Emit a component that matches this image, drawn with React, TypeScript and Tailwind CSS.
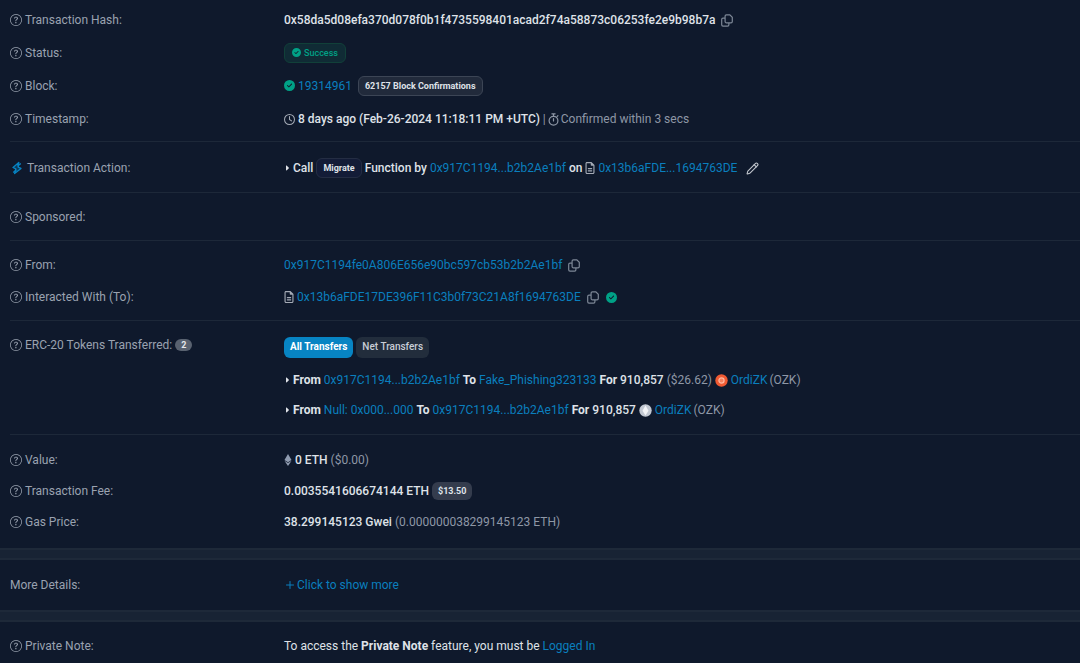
import type { ReactNode } from "react"
import { BsQuestionCircle } from "react-icons/bs"
import { FaCaretRight, FaCircleCheck, FaEthereum, FaRegClock, FaRegFileLines } from "react-icons/fa6"
import { Pencil, Plus } from "lucide-react"

function CopyIcon() {
  return (
    <svg width="12" height="13" viewBox="0 0 12 13" fill="none" stroke="currentColor" strokeWidth="1.2">
      <path d="M5.4 0.8h3.4l2.5 2.5v4.2a1.3 1.3 0 0 1-1.3 1.3H5.4a1.3 1.3 0 0 1-1.3-1.3V2.1a1.3 1.3 0 0 1 1.3-1.3z" />
      <path d="M4 4.2H2A1.3 1.3 0 0 0 0.7 5.5v5.3a1.3 1.3 0 0 0 1.3 1.3h4.6a1.3 1.3 0 0 0 1.3-1.3V9" />
    </svg>
  )
}

function BoltIcon() {
  return (
    <svg width="14" height="14" viewBox="0 0 14 14" className="text-[#0784c3]" fill="none" stroke="currentColor" strokeWidth="1.3" strokeLinejoin="round">
      <path d="M8.8 1.5 3 6.5l2.8 1.3L4.6 12.5 11 7.4 8.2 6.1z" fill="currentColor" fillOpacity="0.3" />
      <path d="M10.8 2.5 7.5 5.2M6.5 8.8 3.2 11.5" />
    </svg>
  )
}

function StopwatchIcon() {
  return (
    <svg width="11" height="13" viewBox="0 0 11 13" fill="none" stroke="currentColor" strokeWidth="1.2" strokeLinecap="round">
      <circle cx="5.5" cy="7.7" r="4.4" />
      <path d="M3.9 0.8h3.2M5.5 0.8v2.4M5.5 5.6v2.3M9 3.6l0.9-0.9" />
    </svg>
  )
}

function CopyButton({ label }: { label: string }) {
  return (
    <button type="button" aria-label={label} className="ml-[3px] text-[#7d8796]">
      <CopyIcon />
    </button>
  )
}

function Address({ children }: { children: ReactNode }) {
  return (
    <a href="#" className="text-[#0a7fbe]">
      {children}
    </a>
  )
}

function Verified() {
  return <FaCircleCheck size={11} className="shrink-0 text-[#00a186]" />
}

function ContractIcon() {
  return <FaRegFileLines className="h-3 w-2.5 text-[#a5abb6]" />
}

function Caret() {
  return <FaCaretRight className="h-2 w-1.5" />
}

type RowProps = {
  label: string
  icon?: ReactNode
  badge?: string
  height?: string
  children?: ReactNode
}

function Row({ label, icon, badge, height = "min-h-8", children }: RowProps) {
  return (
    <div className={`grid grid-cols-[274px_1fr] items-center ${height}`}>
      <dt className="flex items-center gap-[3px] text-[#9aa2b0]">
        {icon ?? <BsQuestionCircle size={12} />}
        {label}
        {badge && <span className="rounded-full bg-[#596270] px-1.5 text-[9px] leading-3 font-bold text-[#e6e8eb]">{badge}</span>}
      </dt>
      <dd className="flex items-center gap-[3px]">{children}</dd>
    </div>
  )
}

const transfers = [
  { from: "0x917C1194...b2b2Ae1bf", to: "Fake_Phishing323133", usd: "($26.62)", logo: "orange" },
  { from: "Null: 0x000...000", to: "0x917C1194...b2b2Ae1bf", usd: "", logo: "silver" },
]

function TokenLogo({ kind }: { kind: string }) {
  if (kind === "orange") {
    return (
      <svg width="13" height="13" viewBox="0 0 13 13">
        <circle cx="6.5" cy="6.5" r="6.2" fill="#f05a32" />
        <circle cx="6.5" cy="6.5" r="2.6" fill="#f5805d" stroke="#ffb8a0" strokeWidth="1.2" />
      </svg>
    )
  }
  return (
    <svg width="13" height="13" viewBox="0 0 13 13">
      <circle cx="6.5" cy="6.5" r="6.2" fill="#c2c8d2" />
      <path d="M6.5 1.5 9.5 6.7 6.5 11.5 3.5 6.7z" fill="#f3f4f7" />
    </svg>
  )
}

function Divider() {
  return <div className="h-3 border-y-2 border-[#1e2939] bg-[#182334]" />
}

export default function App() {
  return (
    <main className="min-h-screen bg-[#0f192c] font-[Roboto,sans-serif] text-[12px] leading-4 whitespace-nowrap text-[#dfe2e8]">
      <dl className="pl-2.5">
        <div className="border-b border-[#1d2839] pt-1 pb-[5px]">
          <Row label="Transaction Hash:">
            <span className="font-medium">0x58da5d08efa370d078f0b1f4735598401acad2f74a58873c06253fe2e9b98b7a</span>
            <CopyButton label="Copy transaction hash" />
          </Row>
          <Row label="Status:" height="min-h-[33px]">
            <span className="flex h-5 items-center gap-[3px] rounded-md border border-[#114039] bg-[#102b35] px-[7px] text-[9px] font-medium text-[#00a186]">
              <FaCircleCheck size={9} />
              Success
            </span>
          </Row>
          <Row label="Block:" height="min-h-[33px]">
            <Verified />
            <Address>19314961</Address>
            <span className="ml-[3px] flex h-5 items-center rounded-md border border-[#3c4555] bg-[#212a3b] px-1.5 text-[9px] font-bold">
              62157 Block Confirmations
            </span>
          </Row>
          <Row label="Timestamp:" height="min-h-[34px]">
            <FaRegClock size={11} className="text-[#a5abb6]" />
            <span className="font-medium">8 days ago (Feb-26-2024 11:18:11 PM +UTC)</span>
            <span className="flex items-center gap-0.5 text-[#8e97a6]">
              | <StopwatchIcon /> Confirmed within 3 secs
            </span>
          </Row>
        </div>

        <div className="border-b border-[#1d2839] pt-2.5 pb-2">
          <Row label="Transaction Action:" icon={<BoltIcon />}>
            <Caret />
            <span className="font-medium">Call</span>
            <span className="flex h-5 items-center rounded-md border border-[#242d43] bg-[#131c37] px-1.5 text-[9px] font-bold">Migrate</span>
            <span className="font-medium">Function by</span>
            <Address>0x917C1194...b2b2Ae1bf</Address>
            <span className="font-medium">on</span>
            <ContractIcon />
            <Address>0x13b6aFDE...1694763DE</Address>
            <button type="button" aria-label="Edit label" className="ml-1.5 text-[#c3c7ce]">
              <Pencil size={13} />
            </button>
          </Row>
        </div>

        <div className="border-b border-[#1d2839] pt-2 pb-[7px]">
          <Row label="Sponsored:" />
        </div>

        <div className="border-b border-[#1d2839] pt-2 pb-[7px]">
          <Row label="From:">
            <Address>0x917C1194fe0A806E656e90bc597cb53b2b2Ae1bf</Address>
            <CopyButton label="Copy sender address" />
          </Row>
          <Row label="Interacted With (To):">
            <ContractIcon />
            <Address>0x13b6aFDE17DE396F11C3b0f73C21A8f1694763DE</Address>
            <CopyButton label="Copy contract address" />
            <span className="ml-1">
              <Verified />
            </span>
          </Row>
        </div>

        <div className="border-b border-[#1d2839] pt-2 pb-[9px]">
          <Row label="ERC-20 Tokens Transferred:" badge="2">
            <div className="flex gap-[3px] pt-1">
              <button type="button" className="h-[21px] rounded-md bg-[#0784c3] px-1.5 text-[10px] font-bold text-white">
                All Transfers
              </button>
              <button type="button" className="h-[21px] rounded-md bg-[#222d3c] px-1.5 text-[10px] font-medium text-[#c9ced6]">
                Net Transfers
              </button>
            </div>
          </Row>
          <dd className="pt-1 pl-[274px]">
            <ul>
              {transfers.map((t) => (
                <li key={t.from} className="flex h-[30px] items-center gap-[3px]">
                  <Caret />
                  <b>From</b>
                  <Address>{t.from}</Address>
                  <b>To</b>
                  <Address>{t.to}</Address>
                  <span className="font-medium">
                    <b>For</b> 910,857
                  </span>
                  {t.usd && <span className="text-[#8e97a6]">{t.usd}</span>}
                  <TokenLogo kind={t.logo} />
                  <span className="flex gap-0.5 text-[#8e97a6]">
                    <Address>OrdiZK</Address>
                    <span>(OZK)</span>
                  </span>
                </li>
              ))}
            </ul>
          </dd>
        </div>

        <div className="pt-[9px] pb-[11px]">
          <Row label="Value:" height="min-h-[31px]">
            <FaEthereum className="h-3 w-2 text-[#8f9bb0]" />
            <span className="font-medium">0 ETH</span>
            <span className="text-[#8e97a6]">($0.00)</span>
          </Row>
          <Row label="Transaction Fee:" height="min-h-[31px]">
            <span className="font-medium">0.0035541606674144 ETH</span>
            <span className="flex h-[18px] items-center rounded-md bg-[#343c4d] px-1.5 text-[9px] font-bold">$13.50</span>
          </Row>
          <Row label="Gas Price:" height="min-h-[31px]">
            <span className="font-medium">38.299145123 Gwei</span>
            <span className="text-[#8e97a6]">(0.000000038299145123 ETH)</span>
          </Row>
        </div>
      </dl>

      <Divider />

      <dl className="py-[9px] pl-2.5">
        <Row label="More Details:" icon={<></>}>
          <button type="button" className="flex items-center gap-px text-[#0a7fbe]">
            <Plus size={12} /> Click to show more
          </button>
        </Row>
      </dl>

      <Divider />

      <dl className="pt-2 pl-2.5">
        <Row label="Private Note:">
          <span>
            To access the <b>Private Note</b> feature, you must be <Address>Logged In</Address>
          </span>
        </Row>
      </dl>
    </main>
  )
}
